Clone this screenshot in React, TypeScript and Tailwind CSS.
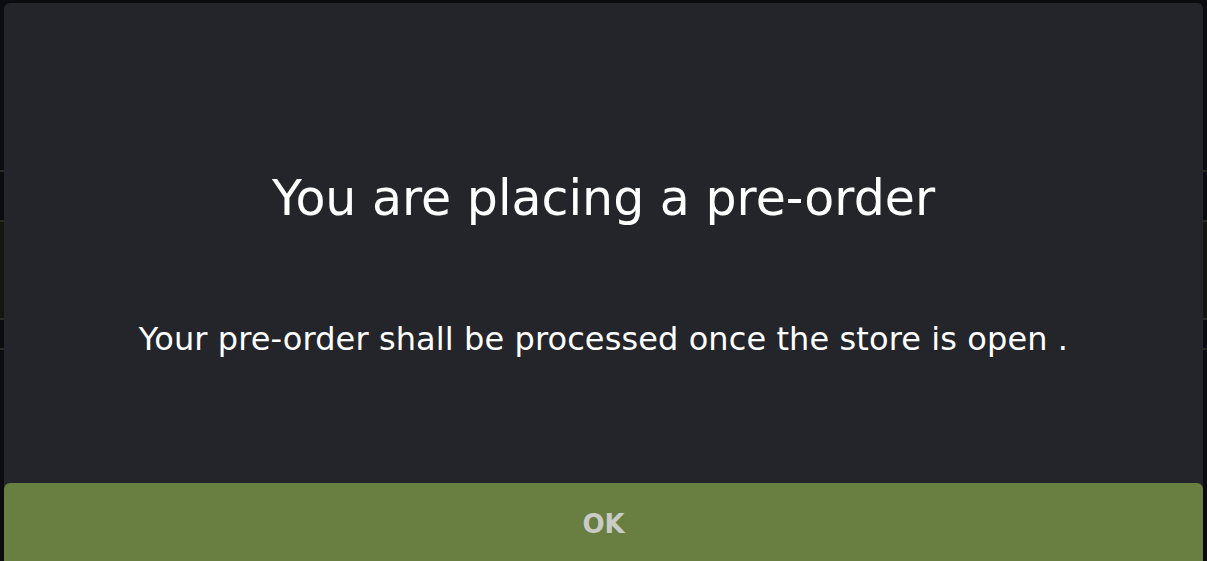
export default function App() {
  const bgRows = [
    { h: 'h-[170px]', c: 'bg-[#0b0c10]' },
    { h: 'h-[2px]', c: 'bg-[#2a2b22]' },
    { h: 'h-[48px]', c: 'bg-[#0a0b0f]' },
    { h: 'h-[2px]', c: 'bg-[#2a2b22]' },
    { h: 'h-[96px]', c: 'bg-[#14150f]' },
    { h: 'h-[2px]', c: 'bg-[#2a2b22]' },
    { h: 'h-[28px]', c: 'bg-[#0a0b0f]' },
    { h: 'h-[2px]', c: 'bg-[#2a2b22]' },
    { h: 'h-[211px]', c: 'bg-[#0b0c10]' },
  ];

  return (
    <div className="relative w-[1207px] h-[561px] overflow-hidden bg-[#0b0c10]" style={{ fontFamily: '"DejaVu Sans", sans-serif' }}>
      <div className="flex flex-col">
        {bgRows.map((r, i) => (
          <div key={i} className={`${r.h} ${r.c}`} />
        ))}
      </div>

      <div className="absolute left-[4px] top-[3px] w-[1199px] h-[570px] rounded-[6px] bg-[#24252a] flex flex-col">
        <div className="flex-1 flex flex-col items-center">
          <h1 className="mt-[167px] text-[49px] leading-[58px] text-white font-normal">
            You are placing a pre-order
          </h1>
          <p className="mt-[91px] text-[32px] leading-[40px] text-white font-normal tracking-[0.1px]">
            Your pre-order shall be processed once the store is open .
          </p>
        </div>
        <button className="h-[90px] rounded-[6px] bg-[#687f41] text-[#c9cbc6] text-[26px] font-bold pb-[8px]">
          OK
        </button>
      </div>
    </div>
  );
}
